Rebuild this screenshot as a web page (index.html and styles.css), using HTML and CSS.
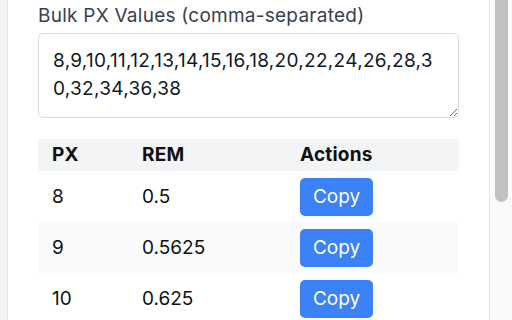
FILE: index.html
```html
<!DOCTYPE html>
<html lang="en">
<head>
<meta charset="utf-8">
<title>PX to REM</title>
<link rel="stylesheet" href="styles.css">
</head>
<body>
<div class="app">
  <div class="side"></div>
  <main class="panel">
    <label class="label" for="bulk">Bulk PX Values (comma-separated)</label>
    <textarea id="bulk" class="bulk">8,9,10,11,12,13,14,15,16,18,20,22,24,26,28,30,32,34,36,38</textarea>
    <table class="table">
      <colgroup>
        <col class="c1"><col class="c2"><col class="c3">
      </colgroup>
      <thead>
        <tr><th>PX</th><th>REM</th><th>Actions</th></tr>
      </thead>
      <tbody>
        <tr><td>8</td><td>0.5</td><td><button class="copy">Copy</button></td></tr>
        <tr><td>9</td><td>0.5625</td><td><button class="copy">Copy</button></td></tr>
        <tr><td>10</td><td>0.625</td><td><button class="copy">Copy</button></td></tr>
      </tbody>
    </table>
  </main>
  <div class="scrollbar"><div class="thumb"></div></div>
</div>
</body>
</html>
```
FILE: styles.css
```css
html, body {
  margin: 0;
  padding: 0;
  height: 320px;
  overflow: hidden;
  background: #ffffff;
}
body {
  font-family: Inter, "Noto Sans", "Liberation Sans", sans-serif;
  font-size: 19px;
  color: #111827;
}
.app {
  display: flex;
  height: 320px;
}
.side {
  width: 7px;
  flex: none;
  background: #f4f4f4;
  border-right: 1px solid #e8e8e8;
}
.panel {
  flex: 1;
  min-width: 0;
  padding: 3px 30px 0 30px;
  display: flex;
  flex-direction: column;
  overflow: hidden;
}
.label {
  display: block;
  font-size: 19px;
  line-height: 25px;
  letter-spacing: 0.25px;
  color: #374151;
  margin-bottom: 5px;
}
.bulk {
  display: block;
  box-sizing: border-box;
  width: 100%;
  height: 85px;
  flex: none;
  margin: 0;
  padding: 13px 14px;
  border: 1px solid #d9dbe0;
  border-radius: 5px;
  font-family: Inter, "Noto Sans", "Liberation Sans", sans-serif;
  font-size: 19px;
  line-height: 28px;
  letter-spacing: 0.3px;
  word-break: break-all;
  color: #111827;
  background: #ffffff;
  resize: vertical;
}
.table {
  margin-top: 21px;
  width: 100%;
  border-collapse: collapse;
  table-layout: fixed;
  flex: none;
}
.c1 { width: 90px; }
.c2 { width: 158px; }
.c3 { width: auto; }
.table th {
  background: #f3f4f6;
  text-align: left;
  font-weight: 700;
  font-size: 19px;
  line-height: 24px;
  letter-spacing: 0.2px;
  padding: 4px 14px;
  color: #111111;
}
.table td {
  text-align: left;
  font-size: 19px;
  line-height: 24px;
  padding: 7px 14px 6px;
  height: 38px;
  color: #111111;
}
.table tbody tr:nth-child(even) td {
  background: #f9fafb;
}
.copy {
  display: block;
  width: 73px;
  height: 38px;
  padding: 0;
  border: none;
  border-radius: 5px;
  background: #3b82f6;
  color: #ffffff;
  font-family: Inter, "Noto Sans", "Liberation Sans", sans-serif;
  font-size: 19px;
  line-height: 38px;
  text-align: center;
}
.scrollbar {
  width: 22px;
  flex: none;
  background: #fafafa;
  border-left: 1px solid #e6e6e6;
  display: flex;
  justify-content: flex-start;
}
.thumb {
  width: 13px;
  height: 202px;
  margin-left: 5px;
  background: #c1c1c1;
  border-radius: 0 0 7px 7px;
}
```
